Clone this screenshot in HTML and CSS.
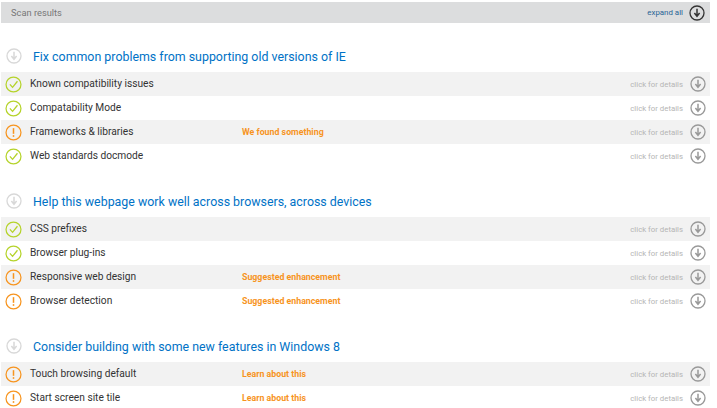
FILE: index.html
```html
<!DOCTYPE html>
<html lang="en">
<head>
  <meta charset="UTF-8">
  <title>Scan results</title>
  <link rel="stylesheet" href="styles.css">
</head>
<body>
  <svg class="defs" width="0" height="0">
    <symbol id="ok" viewBox="0 0 18 18">
      <circle cx="9" cy="9" r="7.9" fill="none" stroke="#b5d32a" stroke-width="1.3"/>
      <path d="M5.2 8.8 8 12 13.2 5.6" fill="none" stroke="#b5d32a" stroke-width="1.4"/>
    </symbol>
    <symbol id="warn" viewBox="0 0 18 18">
      <circle cx="9" cy="9" r="7.9" fill="none" stroke="#f7941e" stroke-width="1.3"/>
      <path d="M9 4.4v6" fill="none" stroke="#f7941e" stroke-width="1.6"/>
      <path d="M9 11.8v1.8" fill="none" stroke="#f7941e" stroke-width="1.6"/>
    </symbol>
    <symbol id="down" viewBox="0 0 16 16">
      <circle cx="8" cy="8" r="7" fill="none" stroke="currentColor" stroke-width="1.3"/>
      <path d="M8 3.8v7M5.4 8 8 11.2 10.6 8" fill="none" stroke="currentColor" stroke-width="1.5"/>
    </symbol>
  </svg>

  <div class="topbar">
    <span class="topbar-title">Scan results</span>
    <span class="expand">expand all</span>
    <svg class="arrow-dark"><use href="#down"/></svg>
  </div>

  <section class="group">
    <h2><svg class="arrow-head"><use href="#down"/></svg>Fix common problems from supporting old versions of IE</h2>
    <div class="row"><svg class="status"><use href="#ok"/></svg><span class="name">Known compatibility issues</span><span class="note"></span><span class="more">click for details</span><svg class="arrow"><use href="#down"/></svg></div>
    <div class="row"><svg class="status"><use href="#ok"/></svg><span class="name">Compatability Mode</span><span class="note"></span><span class="more">click for details</span><svg class="arrow"><use href="#down"/></svg></div>
    <div class="row"><svg class="status"><use href="#warn"/></svg><span class="name">Frameworks &amp; libraries</span><span class="note">We found something</span><span class="more">click for details</span><svg class="arrow"><use href="#down"/></svg></div>
    <div class="row"><svg class="status"><use href="#ok"/></svg><span class="name">Web standards docmode</span><span class="note"></span><span class="more">click for details</span><svg class="arrow"><use href="#down"/></svg></div>
  </section>

  <section class="group">
    <h2><svg class="arrow-head"><use href="#down"/></svg>Help this webpage work well across browsers, across devices</h2>
    <div class="row"><svg class="status"><use href="#ok"/></svg><span class="name">CSS prefixes</span><span class="note"></span><span class="more">click for details</span><svg class="arrow"><use href="#down"/></svg></div>
    <div class="row"><svg class="status"><use href="#ok"/></svg><span class="name">Browser plug-ins</span><span class="note"></span><span class="more">click for details</span><svg class="arrow"><use href="#down"/></svg></div>
    <div class="row"><svg class="status"><use href="#warn"/></svg><span class="name">Responsive web design</span><span class="note">Suggested enhancement</span><span class="more">click for details</span><svg class="arrow"><use href="#down"/></svg></div>
    <div class="row"><svg class="status"><use href="#warn"/></svg><span class="name">Browser detection</span><span class="note">Suggested enhancement</span><span class="more">click for details</span><svg class="arrow"><use href="#down"/></svg></div>
  </section>

  <section class="group">
    <h2><svg class="arrow-head"><use href="#down"/></svg>Consider building with some new features in Windows 8</h2>
    <div class="row"><svg class="status"><use href="#warn"/></svg><span class="name">Touch browsing default</span><span class="note">Learn about this</span><span class="more">click for details</span><svg class="arrow"><use href="#down"/></svg></div>
    <div class="row"><svg class="status"><use href="#warn"/></svg><span class="name">Start screen site tile</span><span class="note">Learn about this</span><span class="more">click for details</span><svg class="arrow"><use href="#down"/></svg></div>
  </section>
</body>
</html>
```

FILE: styles.css
```css
html, body { height: 408px; overflow: hidden; }
body { margin: 0; padding: 2px 7px 0 1px; background: #fff; font-family: Roboto, "Open Sans", sans-serif; color: #333; }
.defs { display: block; height: 0; }

.topbar { display: flex; align-items: center; height: 21px; background: #dcddde; padding: 0 5px 0 10px; margin-bottom: 18px; }
.topbar-title { flex: 1; font-size: 9.3px; color: #777; }
.expand { font-size: 7.9px; color: #2a6496; margin-right: 6px; }
.arrow-dark { width: 16px; height: 16px; color: #333; }

.group { margin-bottom: 18px; }
.group h2 { display: flex; align-items: center; height: 31px; margin: 0; padding-left: 5px; font-size: 12.4px; font-weight: 400; color: #0072c6; padding-bottom: 1px; box-sizing: border-box; }
.arrow-head { width: 16px; height: 16px; margin-right: 11px; color: #d8d8d8; }

.row { display: flex; align-items: center; height: 24px; padding-right: 4px; padding-left: 4px; }
.row:nth-of-type(odd) { background: #f2f2f2; }
.status { width: 17px; height: 17px; margin-right: 8px; }
.name { width: 212px; font-size: 10.2px; color: #333; padding-bottom: 1px; }
.note { flex: 1; font-size: 8.8px; font-weight: 700; color: #f7941e; }
.more { font-size: 7.8px; color: #b5b5b5; margin-right: 7px; }
.arrow { width: 16px; height: 16px; color: #999; }
```
